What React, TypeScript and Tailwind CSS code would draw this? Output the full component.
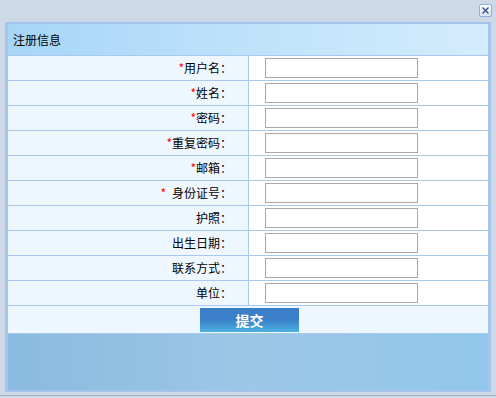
import React from "react";

const rows: { label: string; req: boolean; space?: boolean }[] = [
  { label: "用户名：", req: true },
  { label: "姓名：", req: true },
  { label: "密码：", req: true },
  { label: "重复密码：", req: true },
  { label: "邮箱：", req: true },
  { label: "身份证号：", req: true, space: true },
  { label: "护照：", req: false },
  { label: "出生日期：", req: false },
  { label: "联系方式：", req: false },
  { label: "单位：", req: false },
];

export default function App() {
  return (
    <div className="w-[496px] h-[398px] bg-[#cdd9e7] flex flex-col overflow-hidden font-['Noto_Sans_CJK_SC','Noto_Sans',sans-serif] text-black">
      <div className="h-[22px] flex justify-end items-start pt-[4px] pr-[4px]">
        <div className="w-[13px] h-[13px] rounded-[2px] border border-[#8eaedb] bg-gradient-to-b from-white to-[#d9e6f7] flex items-center justify-center">
          <svg width="11" height="11" viewBox="0 0 11 11">
            <path d="M2.5 2.5 L8.5 8.5 M8.5 2.5 L2.5 8.5" stroke="#2c4c8c" strokeWidth="1.3" />
          </svg>
        </div>
      </div>
      <div className="ml-[5px] w-[486px] h-[370px] border-x-[3px] border-y-2 border-[#a6c3ec] flex flex-col">
        <div className="h-[31px] flex items-center pl-[5px] text-[12px] leading-none bg-gradient-to-r from-[#a6d6f7] via-[#bfe2fa] to-[#d4ecfd]">
          注册信息
        </div>
        {rows.map((r) => (
          <div key={r.label} className="h-[25px] flex border-t border-[#a9c8f0]">
            <div className="w-[241px] bg-[#eef7fe] border-r border-[#a9c8f0] flex items-center justify-end pr-[16px] text-[12px] leading-none">
              {r.req && <span className="text-[#ff0000]">*</span>}
              {r.space && <span className="inline-block w-[6px]" />}
              {r.label}
            </div>
            <div className="flex-1 bg-white flex items-center pl-[16px]">
              <input className="w-[153px] h-[20px] border border-[#a8a8a8] bg-white outline-none" />
            </div>
          </div>
        ))}
        <div className="h-[29px] flex justify-center items-start pt-[2px] bg-[#eef7fe] border-y border-[#a9c8f0]">
          <button className="w-[99px] h-[24px] ml-[3px] flex items-center justify-center text-white font-bold text-[14px] leading-none bg-gradient-to-b from-[#3a7ec6] via-[#3a80c8] to-[#4cb2e2]">
            提交
          </button>
        </div>
        <div className="flex-1 bg-gradient-to-r from-[#89badf] via-[#9cc7e7] to-[#91c7eb]" />
      </div>
      <div className="mt-[3px] h-px bg-[#a3acb7]" />
    </div>
  );
}
